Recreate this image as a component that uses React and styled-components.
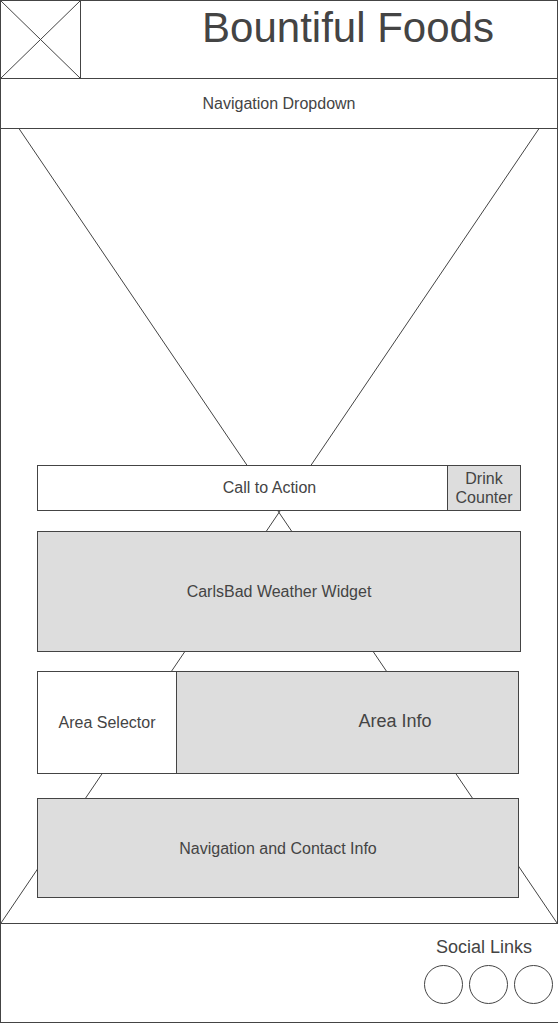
import React from "react";
import styled, { createGlobalStyle, css } from "styled-components";

const ink = "#444";
const paper = "#fff";
const fill = "#ddd";
const line = `1px solid ${ink}`;

const GlobalStyle = createGlobalStyle`
  *, *::before, *::after { box-sizing: border-box; }
  body {
    margin: 0;
    background: ${paper};
    color: ${ink};
    font: 16px/19px "Liberation Sans", Arial, sans-serif;
  }
`;

const Page = styled.div`
  border-top: ${line};
  border-left: ${line};
  border-bottom: ${line};
`;

const Header = styled.header`
  display: flex;
  height: 78px;
  border-right: ${line};
  border-bottom: ${line};
`;

const Logo = styled.a`
  flex: none;
  width: 80px;
  border-right: ${line};
`;

const Cross = styled.svg`
  display: block;
  width: 100%;
  height: 100%;
  stroke: ${ink};
  stroke-width: 1;
`;

const Title = styled.h1`
  flex: 1;
  margin: 0;
  padding: 3px 0 0 58px;
  font-size: 42px;
  line-height: 48px;
  font-weight: 400;
  text-align: center;
  white-space: nowrap;
`;

const Nav = styled.nav`
  position: relative;
  z-index: 1;
  height: 50px;
  border-right: ${line};
  border-bottom: ${line};
  background: ${paper};
`;

const Dropdown = styled.select`
  appearance: none;
  display: block;
  width: 100%;
  height: 100%;
  margin: 0;
  padding: 0;
  border: 0;
  border-radius: 0;
  background: ${paper};
  color: inherit;
  font: inherit;
  text-align: center;
  text-align-last: center;
`;

const Main = styled.main`
  position: relative;
  padding: 336px 0 25px;
  border-right: ${line};
  border-bottom: ${line};
`;

/* The hero image placeholder starts behind the navigation bar. */
const Backdrop = styled.div`
  position: absolute;
  inset: -27px 0 0;
`;

const Stack = styled.div`
  position: relative;
  display: grid;
  gap: ${(p) => p.$gap}px;
  padding: 0 ${(p) => p.$right}px 0 36px;
  & + & {
    margin-top: 19px;
  }
`;

const panel = css`
  display: flex;
  align-items: center;
  justify-content: center;
  border: ${line};
  text-align: center;
`;

const Panel = styled.section`
  ${panel}
  min-height: ${(p) => p.$height}px;
  background: ${fill};
`;

const SplitPanel = styled.section`
  display: flex;
  height: ${(p) => p.$height}px;
  border: ${line};
`;

const CallToAction = styled.button`
  flex: 1;
  margin: 0;
  padding: 0 0 2px 54px;
  border: 0;
  background: ${paper};
  color: inherit;
  font: inherit;
  cursor: pointer;
`;

const DrinkCounter = styled.div`
  display: flex;
  align-items: center;
  justify-content: center;
  width: 73px;
  border-left: ${line};
  background: ${fill};
  text-align: center;
`;

const SelectorCell = styled.div`
  flex: none;
  width: 138px;
`;

const AreaInfo = styled.div`
  flex: 1;
  display: flex;
  align-items: center;
  justify-content: center;
  padding: 0 0 2px 95px;
  border-left: ${line};
  background: ${fill};
  font-size: 18px;
`;

const Footer = styled.footer`
  display: flex;
  justify-content: flex-end;
  padding: 13px 5px 18px 0;
`;

const SocialTitle = styled.h2`
  margin: 0 0 8px;
  padding-left: 12px;
  font-size: 18px;
  line-height: 20px;
  font-weight: 400;
`;

const SocialRow = styled.div`
  display: flex;
  gap: 6px;
`;

const SocialLink = styled.a`
  width: 39px;
  height: 39px;
  border: ${line};
  border-radius: 50%;
`;

function CrossLines() {
  return (
    <Cross aria-hidden="true">
      <line x1="0" y1="0" x2="100%" y2="100%" />
      <line x1="100%" y1="0" x2="0" y2="100%" />
    </Cross>
  );
}

export default function App() {
  return (
    <>
      <GlobalStyle />
      <Page>
        <Header>
          <Logo href="#home" aria-label="Home">
            <CrossLines />
          </Logo>
          <Title>Bountiful Foods</Title>
        </Header>
        <Nav>
          <Dropdown aria-label="Navigation">
            <option>Navigation Dropdown</option>
          </Dropdown>
        </Nav>
        <Main>
          <Backdrop>
            <CrossLines />
          </Backdrop>
          <Stack $gap={20} $right={36}>
            <SplitPanel $height={46}>
              <CallToAction type="button">Call to Action</CallToAction>
              <DrinkCounter>
                Drink
                <br />
                Counter
              </DrinkCounter>
            </SplitPanel>
            <Panel $height={121}>CarlsBad Weather Widget</Panel>
          </Stack>
          <Stack $gap={24} $right={38}>
            <SplitPanel $height={103}>
              <SelectorCell>
                <Dropdown aria-label="Area">
                  <option>Area Selector</option>
                </Dropdown>
              </SelectorCell>
              <AreaInfo>Area Info</AreaInfo>
            </SplitPanel>
            <Panel $height={100}>Navigation and Contact Info</Panel>
          </Stack>
        </Main>
        <Footer>
          <div>
            <SocialTitle>Social Links</SocialTitle>
            <SocialRow>
              <SocialLink href="#facebook" aria-label="Facebook" />
              <SocialLink href="#instagram" aria-label="Instagram" />
              <SocialLink href="#twitter" aria-label="Twitter" />
            </SocialRow>
          </div>
        </Footer>
      </Page>
    </>
  );
}
